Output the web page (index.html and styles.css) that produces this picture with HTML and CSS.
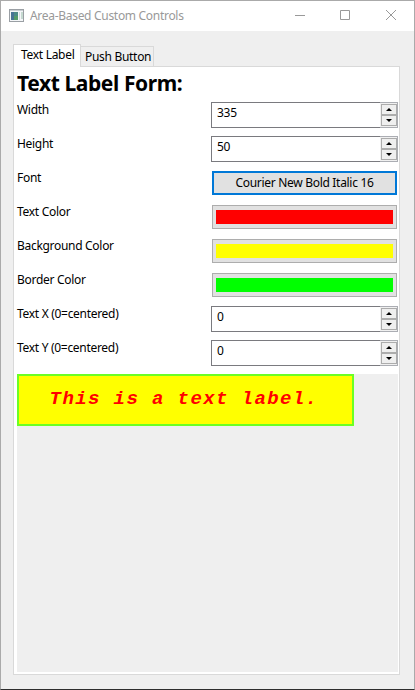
FILE: index.html
```html
<!DOCTYPE html>
<html lang="en">
<head>
<meta charset="utf-8">
<title>Area-Based Custom Controls</title>
<link rel="stylesheet" href="styles.css">
</head>
<body>
<div class="window">
  <header class="titlebar">
    <svg class="app-icon" width="15" height="13" viewBox="0 0 15 13">
      <rect x=".5" y=".5" width="14" height="12" fill="#f4f6f8" stroke="#9a9fa4"/>
      <rect x="1" y="1" width="13" height="1" fill="#c9ced3"/>
      <rect x="2" y="3" width="7" height="8" fill="#4c8a86"/>
      <rect x="2" y="3" width="3" height="8" fill="#477395"/>
      <rect x="5" y="7" width="4" height="4" fill="#549a69"/>
      <rect x="10" y="3" width="1" height="8" fill="#d5dce3"/>
      <rect x="12" y="3" width="2" height="7" fill="#c5d9d0"/>
    </svg>
    <span class="title">Area-Based Custom Controls</span>
    <svg class="controls" width="106" height="12" viewBox="0 0 106 12" fill="none" stroke="#999">
      <path d="M0 6.5h10M45.500 1.500h9v9h-9zM91 1l10 10M101 1l-10 10"/>
    </svg>
  </header>
  <main class="body">
    <nav class="tabs">
      <div class="tab active">Text Label</div>
      <div class="tab">Push Button</div>
    </nav>
    <section class="pane">
      <h1>Text Label Form:</h1>
      <div class="row"><label>Width</label><div class="spin"><span>335</span><div class="steps"><i class="up"></i><i class="down"></i></div></div></div>
      <div class="row"><label>Height</label><div class="spin"><span>50</span><div class="steps"><i class="up"></i><i class="down"></i></div></div></div>
      <div class="row"><label>Font</label><button class="btn focus">Courier New Bold Italic 16</button></div>
      <div class="row"><label>Text Color</label><button class="btn"><b class="swatch red"></b></button></div>
      <div class="row"><label>Background Color</label><button class="btn"><b class="swatch yellow"></b></button></div>
      <div class="row"><label>Border Color</label><button class="btn"><b class="swatch green"></b></button></div>
      <div class="row"><label>Text X (0=centered)</label><div class="spin"><span>0</span><div class="steps"><i class="up"></i><i class="down"></i></div></div></div>
      <div class="row"><label>Text Y (0=centered)</label><div class="spin"><span>0</span><div class="steps"><i class="up"></i><i class="down"></i></div></div></div>
      <div class="preview"><div class="sample">This is a text label.</div></div>
    </section>
  </main>
</div>
</body>
</html>
```
FILE: styles.css
```css
* { box-sizing: border-box; }
body {
  margin: 0;
  font-family: "Noto Sans", "Open Sans", sans-serif;
  font-size: 12px;
  line-height: 16px;
  color: #000;
  letter-spacing: -0.3px;
  white-space: nowrap;
}
.window {
  width: 415px;
  height: 690px;
  display: flex;
  flex-direction: column;
  border: 1px solid #aaa;
  border-bottom-color: #2e2e2e;
  background: #efefef;
}
.titlebar {
  height: 30px;
  display: flex;
  align-items: center;
  padding: 0 13px 0 8px;
  background: #fff;
  color: #999;
}
.app-icon { margin-bottom: 2px; }
.title { margin-left: 6px; }
.controls { margin-left: auto; margin-bottom: 2px; }
.body {
  flex: 1;
  display: flex;
  flex-direction: column;
  padding: 13px 14px 14px 12px;
}
.tabs { display: flex; align-items: flex-end; height: 22px; }
.tab {
  width: 73px;
  height: 20px;
  padding: 2px 0 0 4px;
  border: 1px solid #d9d9d9;
  border-left: 0;
  border-bottom: 0;
}
.tab.active {
  width: 68px;
  height: 23px;
  margin-bottom: -1px;
  padding: 2px 0 0 7px;
  border-left: 1px solid #d9d9d9;
  background: #fff;
  position: relative;
}
.pane {
  flex: 1;
  display: flex;
  flex-direction: column;
  padding: 2px 0 2px 3px;
  border: 1px solid #d9d9d9;
  background: #fff;
}
h1 {
  margin: 0;
  height: 33px;
  font-size: 21px;
  line-height: 29px;
  letter-spacing: -0.4px;
}
.row {
  height: 34px;
  flex: none;
  display: flex;
  justify-content: space-between;
  padding-right: 1px;
}
.spin {
  width: 187px;
  height: 26px;
  display: flex;
  justify-content: space-between;
  padding: 2px 0 0 5px;
  border: 1px solid #7a7a7f;
  border-right: 0;
}
.steps {
  width: 18px;
  height: 26px;
  margin-top: -3px;
  padding: 1px;
  border: 1px solid #abadb3;
  border-left: 0;
  background: #f0f0f0;
}
.steps i {
  display: flex;
  justify-content: center;
  align-items: center;
  width: 16px;
  height: 11px;
  border: 1px solid #acacac;
  background: #efefef;
}
.steps i::before { content: ""; border: 3px solid transparent; }
.steps .up::before { border-top-width: 0; border-bottom-color: #000; }
.steps .down::before { border-bottom-width: 0; border-top-color: #000; }
.btn {
  width: 185px;
  height: 24px;
  margin: 1px 1px 0 0;
  padding: 0;
  display: flex;
  align-items: center;
  justify-content: center;
  border: 1px solid #adadad;
  background: #e1e1e1;
  font: inherit;
  letter-spacing: inherit;
  color: #000;
}
.btn.focus { border: 2px solid #0078d7; }
.swatch { width: 177px; height: 14px; }
.red { background: #f00; }
.yellow { background: #ff0; }
.green { background: #0f0; }
.preview { flex: 1; margin-right: 1px; background: #efefef; }
.sample {
  width: 337px;
  height: 52px;
  padding-right: 3px;
  border: 2px solid #6cff24;
  background: #ff0;
  color: #f00;
  font: italic bold 19px/46px "Liberation Mono", monospace;
  letter-spacing: 1.400px;
  text-align: center;
}
```
